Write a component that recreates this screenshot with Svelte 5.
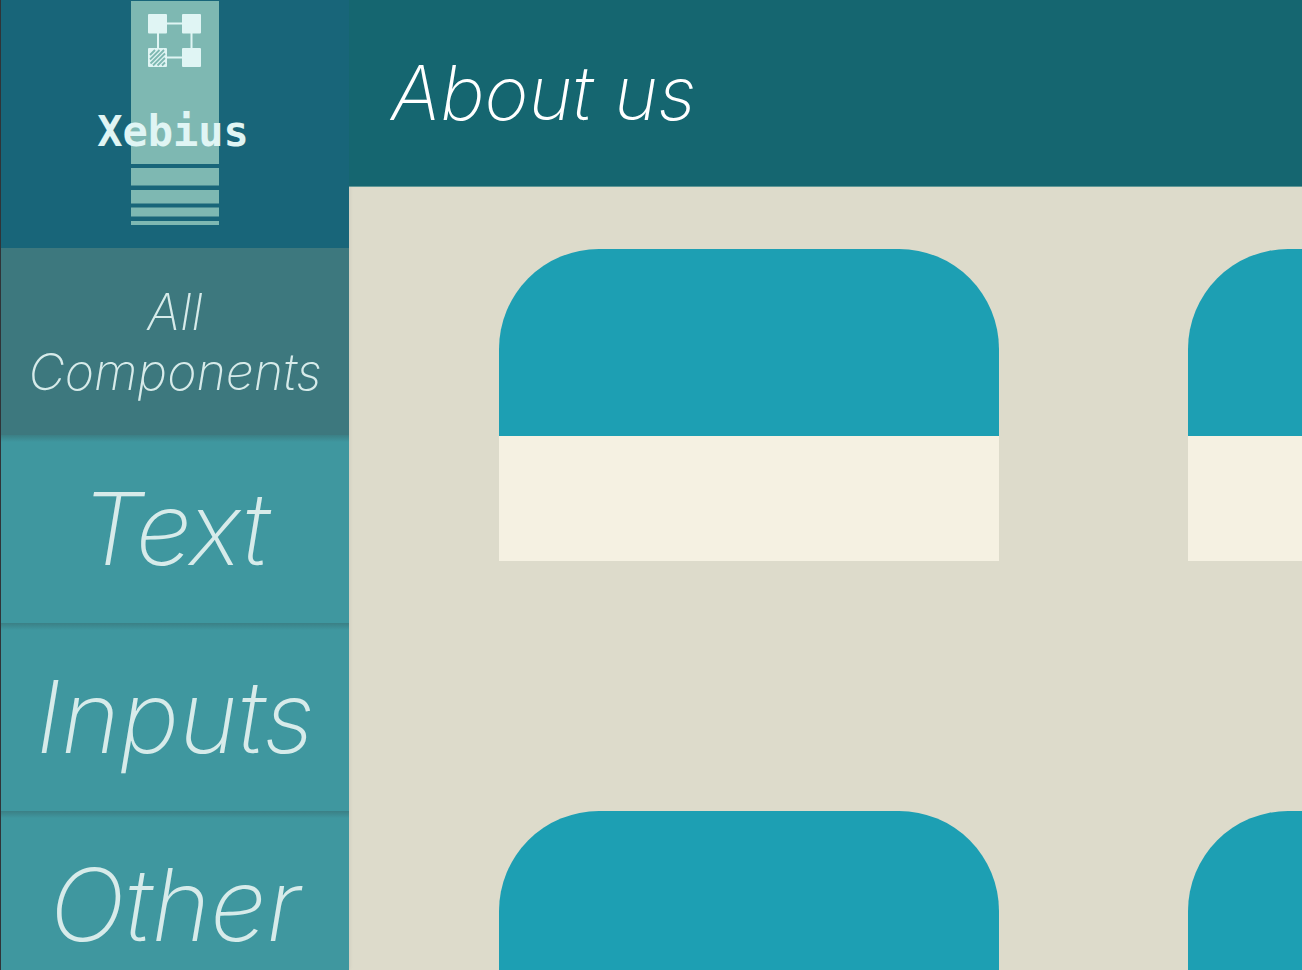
<script>
  const items = [
    { label: 'All Components', active: true },
    { label: 'Text' },
    { label: 'Inputs' },
    { label: 'Other' }
  ];
  const cards = [1, 2, 3, 4];
</script>

<div class="shell">
  <aside>
    <a class="logo" href="#home">
      <svg width="156" height="226" viewBox="0 0 156 226" role="img" aria-label="Xebius">
        <path
          fill="#7eb8b2"
          d="M34 1h88v163H34zM34 168h88v17.500H34zM34 190h88v13.500H34zM34 207.500h88v9H34zM34 221h88v4H34z"
        />
        <path
          d="M61 23.500h33.500v34H61z"
          stroke="#e0f5f4" stroke-width="2" fill="none"
        />
        <g fill="#e0f5f4">
          <rect x="51" y="14" width="19" height="19.500" rx="1" />
          <rect x="85" y="14" width="19" height="19.500" rx="1" />
          <rect x="85" y="48" width="19" height="19" rx="1" />
          <rect x="51" y="48" width="19" height="19" rx="1" />
        </g>
        <path
          d="M53 55l5-5M53 59.500l9.500-9.500M53.500 63.500L67 50M56 65.500L68 53.500M60.500 65.500l7.500-7.500M65 65.500l3-3"
          stroke="#7eb8b2" stroke-width="1.800" fill="none"
        />
        <text x="76" y="146" text-anchor="middle">Xebius</text>
      </svg>
    </a>
    <nav aria-label="Components">
      {#each items as item}
        <a href="#{item.label}" class:active={item.active}>{item.label}</a>
      {/each}
    </nav>
  </aside>
  <div class="page">
    <header><h1>About us</h1></header>
    <main>
      {#each cards as card (card)}
        <article><div class="cover"></div><div class="body"></div></article>
      {/each}
    </main>
  </div>
</div>

<style>
  :global(body) {
    margin: 0;
    background: #dddbcb;
  }
  .shell {
    display: flex;
    height: 100vh;
    overflow: hidden;
    font-family: Inter, sans-serif;
    font-style: italic;
    font-weight: 200;
    font-optical-sizing: none;
  }
  aside {
    box-sizing: border-box;
    flex: 0 0 349px;
    display: flex;
    flex-direction: column;
    border-left: 1px solid #303438;
    background: #3f979f;
    box-shadow: 0 0 4px rgba(0, 0, 0, 0.1);
  }
  .logo {
    flex: none;
    display: flex;
    justify-content: center;
    height: 248px;
    background: #186579;
  }
  .logo text {
    font: normal 700 42px "DejaVu Sans Mono", monospace;
    fill: #e0f5f4;
  }
  nav {
    display: flex;
    flex-direction: column;
  }
  nav a {
    box-sizing: border-box;
    flex: none;
    display: flex;
    align-items: center;
    justify-content: center;
    height: 187px;
    padding: 0 24px;
    color: #d7ebea;
    font-size: 100px;
    line-height: 120px;
    text-align: center;
    text-decoration: none;
  }
  nav a + a {
    height: 188px;
    background: linear-gradient(#3b7f85, #3f979f 7px);
  }
  nav a.active {
    background: #3d787e;
    font-size: 50px;
    line-height: 60px;
  }
  .page {
    flex: 1;
    min-width: 0;
  }
  header {
    box-sizing: border-box;
    display: flex;
    align-items: center;
    height: 187px;
    padding: 0 42px;
    background: #156670;
    border-bottom: 1px solid #5f9694;
  }
  h1 {
    margin: 0;
    color: #fff;
    font-size: 75px;
    font-weight: 200;
    line-height: 90px;
  }
  main {
    display: grid;
    grid-template-columns: repeat(2, 500px);
    gap: 250px 189px;
    padding: 62px 150px;
  }
  article {
    border-radius: 100px 100px 0 0;
    overflow: hidden;
  }
  .cover {
    height: 187px;
    background: #1d9fb3;
  }
  .body {
    height: 125px;
    background: #f5f1e2;
  }
</style>
